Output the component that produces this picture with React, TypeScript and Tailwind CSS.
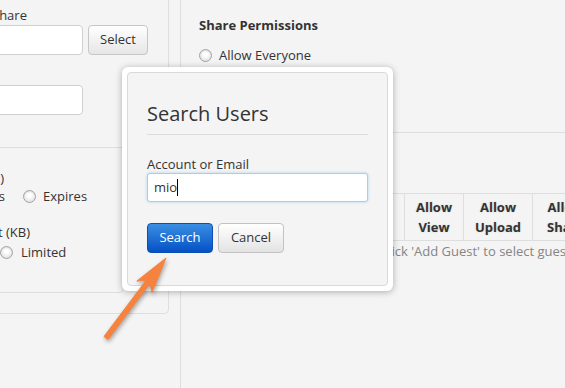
import React from "react";

const Radio: React.FC = () => (
  <span className="inline-block w-[13px] h-[13px] shrink-0 rounded-full border border-[#a3a3a3] bg-[radial-gradient(circle_at_50%_40%,#ffffff_20%,#d6d6d6)] shadow-[inset_0_1px_1px_rgba(0,0,0,0.08)]" />
);

// label text whose tail is all that shows at the left edge of the page
const CutText: React.FC<{ w: string; children: React.ReactNode }> = ({ w, children }) => (
  <div className={`flex justify-end whitespace-nowrap shrink-0 ${w}`}>{children}</div>
);

export default function App() {
  return (
    <div className="relative w-[565px] h-[388px] overflow-hidden bg-[#f4f4f4] text-[#333] font-['Open_Sans',sans-serif] text-[13px] flex">
      {/* Left column */}
      <div className="w-[169px] shrink-0 h-[314px] border-r border-b border-[#dedede] rounded-br-[5px] flex flex-col">
        <div className="pt-[5px] leading-[20px] -ml-[8px]">Share</div>
        <div className="flex items-center">
          <div className="w-[100px] -ml-[17px] h-[30px] bg-white border border-[#cfcfcf] rounded-[4px]" />
          <button className="ml-[5px] w-[60px] h-[30px] rounded-[4px] border border-[#c6c6c6] bg-gradient-to-b from-white to-[#e6e6e6] text-[#333] text-[13px]">
            Select
          </button>
        </div>
        <div className="mt-[30px] w-[100px] -ml-[17px] h-[30px] bg-white border border-[#cfcfcf] rounded-[4px]" />

        {/* Expiration / size panel */}
        <div className="mt-[32px] w-[124px] h-[146px] border-t border-r border-b border-[#dedede] rounded-br-[5px] pt-[22px] leading-[17px]">
          <CutText w="w-[4px]">Expiration (Days)</CutText>
          <div className="flex items-center h-[18px]">
            <CutText w="w-[5px]">Never Expires</CutText>
            <span className="ml-[18px] flex"><Radio /></span>
            <span className="ml-[7px]">Expires</span>
          </div>
          <div className="mt-[19px]">
            <CutText w="w-[30px]">Size Limit (KB)</CutText>
          </div>
          <div className="mt-[2px] flex items-center h-[18px]">
            <span className="flex"><Radio /></span>
            <span className="ml-[8px]">Limited</span>
          </div>
        </div>
      </div>

      {/* Right column */}
      <div className="ml-[11px] flex-1 h-full border-l border-[#dedede] flex flex-col">
        <div className="h-[133px] border-b border-[#dedede] pl-[18px] pt-[15px]">
          <div className="font-bold leading-[20px]">Share Permissions</div>
          <div className="mt-[11px] flex items-center gap-[7px] leading-[18px]">
            <Radio />
            <span>Allow Everyone</span>
          </div>
          <div className="mt-[10px] flex items-center gap-[7px] leading-[18px]">
            <Radio />
            <span>Allow Selected Users</span>
          </div>
        </div>

        <div className="mt-[60px] ml-[18px]">
          <div className="grid grid-cols-[205px_59px_69px_1fr] h-[48px] border-t border-b border-[#dedede] font-bold leading-[20px] text-center [text-shadow:0_0_2px_rgba(0,0,0,0.15)]">
            <div className="flex items-center justify-center">Guest</div>
            <div className="border-l border-[#dedede] flex items-center justify-center">Allow<br />View</div>
            <div className="border-l border-[#dedede] flex items-center justify-center">Allow<br />Upload</div>
            <div className="border-l border-[#dedede] flex items-center pl-[14px] whitespace-nowrap">Allow<br />Share</div>
          </div>
          <div className="pl-[181px] pt-[1px] leading-[18px] text-[#858585] whitespace-nowrap">
            Click 'Add Guest' to select guests
          </div>
        </div>
      </div>

      {/* Search Users dialog */}
      <div className="absolute left-[122px] top-[67px] w-[271px] h-[224px] bg-white rounded-[6px] p-[5px] shadow-[0_1px_7px_rgba(0,0,0,0.3)]">
        <div className="h-full bg-[#f4f4f4] border border-[#d9d9d9] rounded-[4px] px-[19px] pt-[27px]">
          <div className="text-[20px] leading-[28px] pb-[6px] border-b border-[#dcdcdc] text-[#333]">Search Users</div>
          <div className="mt-[20px] leading-[18px]">Account or Email</div>
          <div className="h-[29px] bg-white border border-[#a9cdee] rounded-[3px] shadow-[0_0_3px_rgba(82,168,236,0.45)] flex items-center pl-[6px]">
            <span>mio</span>
            <span className="inline-block w-px h-[17px] bg-black" />
          </div>
          <div className="mt-[21px] flex gap-[5px]">
            <button className="w-[66px] h-[30px] rounded-[4px] border border-[#0b4eb3] bg-gradient-to-b from-[#3a8ee2] to-[#0450c6] text-white text-[13px]">
              Search
            </button>
            <button className="w-[66px] h-[30px] rounded-[4px] border border-[#c2c2c2] bg-gradient-to-b from-white to-[#e3e3e3] text-[#333] text-[13px]">
              Cancel
            </button>
          </div>
        </div>
      </div>

      {/* Annotation arrow */}
      <svg className="absolute left-0 top-0 pointer-events-none drop-shadow-[1px_2px_2px_rgba(0,0,0,0.35)]" width="565" height="388" viewBox="0 0 565 388">
        <polygon
          points="108,339.5 150,283.5 152,292.5 166,258 136.8,281.1 146,280.5 104,336.5"
          fill="#f5833f"
          stroke="#f5833f"
          strokeWidth="1"
          strokeLinejoin="round"
        />
      </svg>
    </div>
  );
}
